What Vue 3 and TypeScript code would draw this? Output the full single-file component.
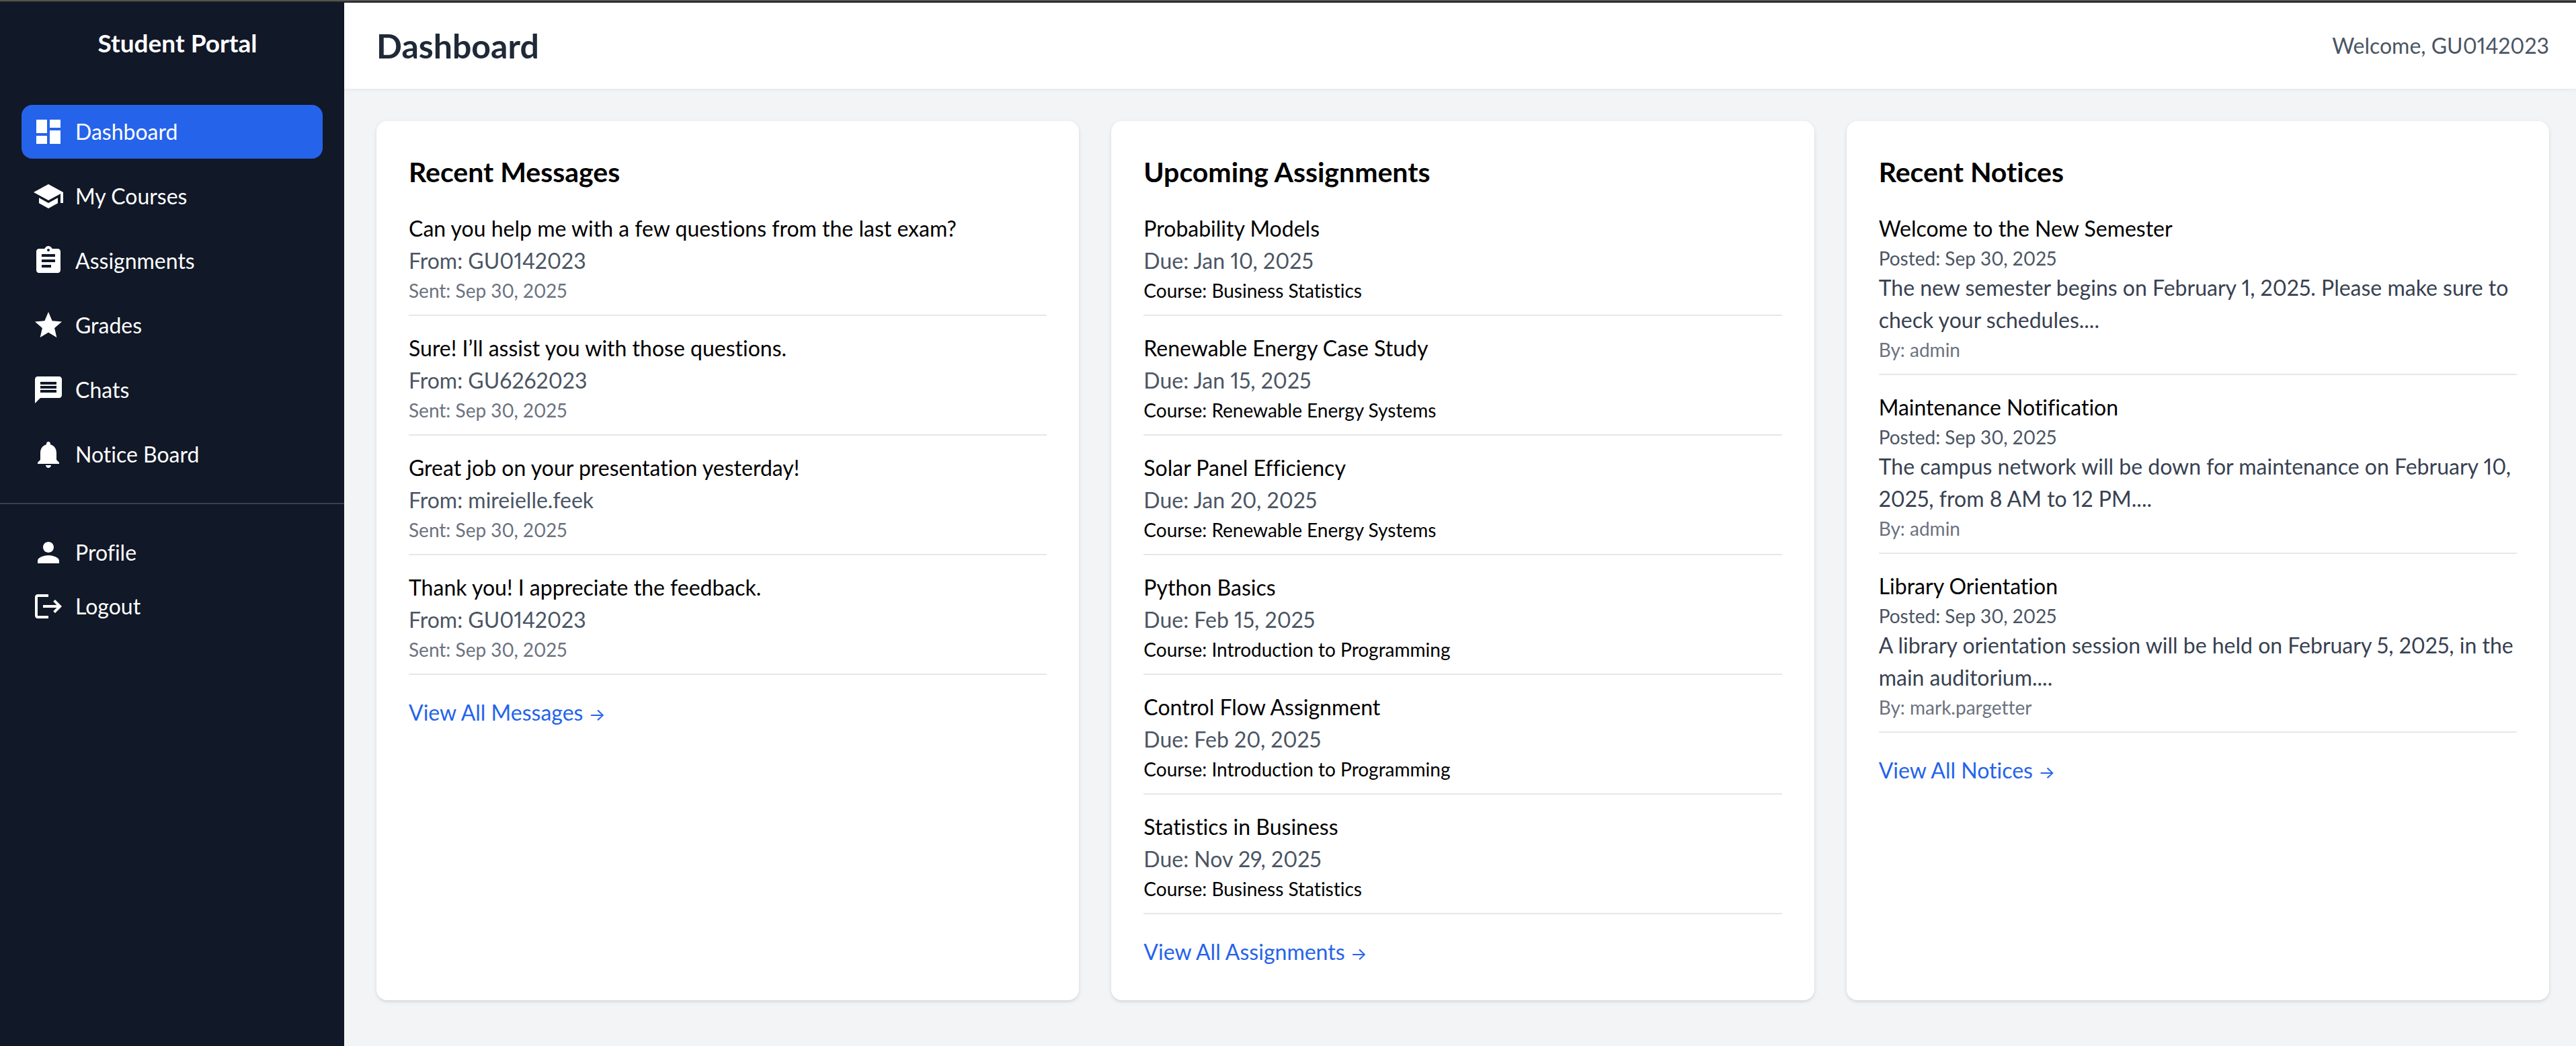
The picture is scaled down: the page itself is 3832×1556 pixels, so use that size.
<script setup lang="ts">
interface NavItem { label: string; icon: string; active?: boolean }
interface Line { text: string; kind: string }
interface Panel { title: string; entries: Line[][]; more: string }

const mainNav: NavItem[] = [
  { label: 'Dashboard', active: true, icon: 'M3 13h8V3H3v10zm0 8h8v-6H3v6zm10 0h8V11h-8v10zm0-18v6h8V3h-8z' },
  { label: 'My Courses', icon: 'M5 13.18v4L12 21l7-3.82v-4L12 17l-7-3.82zM12 3L1 9l11 6 9-4.91V17h2V9L12 3z' },
  { label: 'Assignments', icon: 'M19 3h-4.18C14.4 1.84 13.3 1 12 1c-1.3 0-2.4.84-2.82 2H5c-1.1 0-2 .9-2 2v14c0 1.1.9 2 2 2h14c1.1 0 2-.9 2-2V5c0-1.1-.9-2-2-2zm-7 0c.55 0 1 .45 1 1s-.45 1-1 1-1-.45-1-1 .45-1 1-1zm2 14H7v-2h7v2zm3-4H7v-2h10v2zm0-4H7V7h10v2z' },
  { label: 'Grades', icon: 'M12 17.27L18.18 21l-1.64-7.03L22 9.24l-7.19-.61L12 2 9.19 8.63 2 9.24l5.46 4.73L5.82 21z' },
  { label: 'Chats', icon: 'M20 2H4c-1.1 0-1.99.9-1.99 2L2 22l4-4h14c1.1 0 2-.9 2-2V4c0-1.1-.9-2-2-2zm-2 12H6v-2h12v2zm0-3H6V9h12v2zm0-3H6V6h12v2z' },
  { label: 'Notice Board', icon: 'M12 22c1.1 0 2-.9 2-2h-4c0 1.1.89 2 2 2zm6-6v-5c0-3.07-1.64-5.64-4.5-6.32V4c0-.83-.67-1.5-1.5-1.5s-1.5.67-1.5 1.5v.68C7.63 5.36 6 7.92 6 11v5l-2 2v1h16v-1l-2-2z' },
]

const accountNav: NavItem[] = [
  { label: 'Profile', icon: 'M12 12c2.21 0 4-1.79 4-4s-1.79-4-4-4-4 1.79-4 4 1.79 4 4 4zm0 2c-2.67 0-8 1.34-8 4v2h16v-2c0-2.66-5.33-4-8-4z' },
  { label: 'Logout', icon: 'M17 7l-1.41 1.41L18.17 11H8v2h10.17l-2.58 2.58L17 17l5-5zM4 5h8V3H4c-1.1 0-2 .9-2 2v14c0 1.1.9 2 2 2h8v-2H4V5z' },
]

const message = (text: string, from: string): Line[] => [
  { text, kind: 'heading' },
  { text: `From: ${from}`, kind: 'detail' },
  { text: 'Sent: Sep 30, 2025', kind: 'small faint' },
]
const assignment = (text: string, due: string, course: string): Line[] => [
  { text, kind: 'heading' },
  { text: `Due: ${due}, 2025`, kind: 'detail' },
  { text: `Course: ${course}`, kind: 'small' },
]
const notice = (text: string, body: string, by: string): Line[] => [
  { text, kind: 'heading' },
  { text: 'Posted: Sep 30, 2025', kind: 'small detail' },
  { text: body, kind: 'body' },
  { text: `By: ${by}`, kind: 'small faint' },
]

const panels: Panel[] = [
  {
    title: 'Recent Messages',
    more: 'View All Messages',
    entries: [
      message('Can you help me with a few questions from the last exam?', 'GU0142023'),
      message('Sure! I’ll assist you with those questions.', 'GU6262023'),
      message('Great job on your presentation yesterday!', 'mireielle.feek'),
      message('Thank you! I appreciate the feedback.', 'GU0142023'),
    ],
  },
  {
    title: 'Upcoming Assignments',
    more: 'View All Assignments',
    entries: [
      assignment('Probability Models', 'Jan 10', 'Business Statistics'),
      assignment('Renewable Energy Case Study', 'Jan 15', 'Renewable Energy Systems'),
      assignment('Solar Panel Efficiency', 'Jan 20', 'Renewable Energy Systems'),
      assignment('Python Basics', 'Feb 15', 'Introduction to Programming'),
      assignment('Control Flow Assignment', 'Feb 20', 'Introduction to Programming'),
      assignment('Statistics in Business', 'Nov 29', 'Business Statistics'),
    ],
  },
  {
    title: 'Recent Notices',
    more: 'View All Notices',
    entries: [
      notice('Welcome to the New Semester', 'The new semester begins on February 1, 2025. Please make sure to check your schedules....', 'admin'),
      notice('Maintenance Notification', 'The campus network will be down for maintenance on February 10, 2025, from 8 AM to 12 PM....', 'admin'),
      notice('Library Orientation', 'A library orientation session will be held on February 5, 2025, in the main auditorium....', 'mark.pargetter'),
    ],
  },
]
</script>

<template>
  <div class="portal">
    <aside class="sidebar">
      <div class="brand">Student Portal</div>
      <nav class="nav nav-main" aria-label="Main">
        <a v-for="item in mainNav" :key="item.label" href="#" class="nav-link" :class="{ active: item.active }">
          <svg class="icon" viewBox="0 0 24 24" aria-hidden="true"><path :d="item.icon" /></svg>
          <span>{{ item.label }}</span>
        </a>
      </nav>
      <nav class="nav nav-account" aria-label="Account">
        <a v-for="item in accountNav" :key="item.label" href="#" class="nav-link">
          <svg class="icon" viewBox="0 0 24 24" aria-hidden="true"><path :d="item.icon" /></svg>
          <span>{{ item.label }}</span>
        </a>
      </nav>
    </aside>
    <div class="content">
      <header class="topbar">
        <h1>Dashboard</h1>
        <span class="welcome">Welcome, GU0142023</span>
      </header>
      <main class="panels">
        <section v-for="panel in panels" :key="panel.title" class="card">
          <h2>{{ panel.title }}</h2>
          <ul class="entries">
            <li v-for="(entry, i) in panel.entries" :key="i" class="entry">
              <p v-for="line in entry" :key="line.text" :class="line.kind">{{ line.text }}</p>
            </li>
          </ul>
          <a href="#" class="more">{{ panel.more }} <span class="arrow">→</span></a>
        </section>
      </main>
    </div>
  </div>
</template>

<style>
body {
  margin: 0;
  background: #f3f4f6;
}
</style>

<style scoped>
.portal {
  box-sizing: border-box;
  display: flex;
  min-height: 100vh;
  border-top: 2px solid #545454;
  font-family: Lato, "Noto Sans", sans-serif;
  font-size: 32px;
  line-height: 48px;
  font-variant-ligatures: none;
  font-variant-numeric: proportional-nums;
  color: #000;
  background: #f3f4f6;
}
.portal * {
  box-sizing: border-box;
}
.sidebar {
  flex: 0 0 512px;
  border-top: 2px solid #1f1f1f;
  background: #111827;
  color: #fff;
}
.brand {
  padding: 32px 32px 32px 48px;
  font-size: 37px;
  line-height: 56px;
  font-weight: 700;
  text-align: center;
}
.nav {
  display: flex;
  flex-direction: column;
  padding: 32px;
}
.nav-main {
  gap: 16px;
}
.nav-account {
  border-top: 2px solid #374151;
}
.nav-link {
  display: flex;
  align-items: center;
  gap: 16px;
  padding: 16px;
  border-radius: 16px;
  color: #fff;
  text-decoration: none;
}
.nav-link.active {
  background: #2563eb;
}
.icon {
  width: 48px;
  height: 48px;
  fill: currentColor;
}
.content {
  flex: 1;
  min-width: 0;
  border-top: 2px solid #1f1f1f;
}
.topbar {
  display: flex;
  align-items: center;
  justify-content: space-between;
  padding: 32px 40px 32px 48px;
  background: #fff;
  box-shadow: 0 2px 4px rgba(0, 0, 0, 0.05);
}
h1,
h2,
p,
ul {
  margin: 0;
  padding: 0;
}
h1 {
  font-size: 50px;
  line-height: 64px;
  font-weight: 700;
  color: #1f2937;
}
.welcome {
  color: #4b5563;
}
.panels {
  display: grid;
  grid-template-columns: repeat(3, minmax(0, 1fr));
  gap: 48px;
  padding: 48px 40px 48px 48px;
}
.card {
  padding: 48px;
  border-radius: 16px;
  background: #fff;
  box-shadow: 0 2px 6px rgba(0, 0, 0, 0.1), 0 2px 4px -2px rgba(0, 0, 0, 0.1);
}
h2 {
  margin-bottom: 32px;
  font-size: 41px;
  line-height: 56px;
  font-weight: 700;
}
.entries {
  display: flex;
  flex-direction: column;
  gap: 24px;
  list-style: none;
}
.entry {
  padding-bottom: 16px;
  border-bottom: 2px solid #e5e7eb;
}
.detail {
  color: #4b5563;
}
.body {
  color: #374151;
}
.small {
  font-size: 28px;
  line-height: 40px;
}
.faint {
  color: #6b7280;
}
.more {
  display: inline-block;
  margin-top: 32px;
  color: #2563eb;
  text-decoration: none;
}
.arrow {
  font-family: Inter, sans-serif;
  font-size: 26px;
  line-height: 24px;
}
</style>
